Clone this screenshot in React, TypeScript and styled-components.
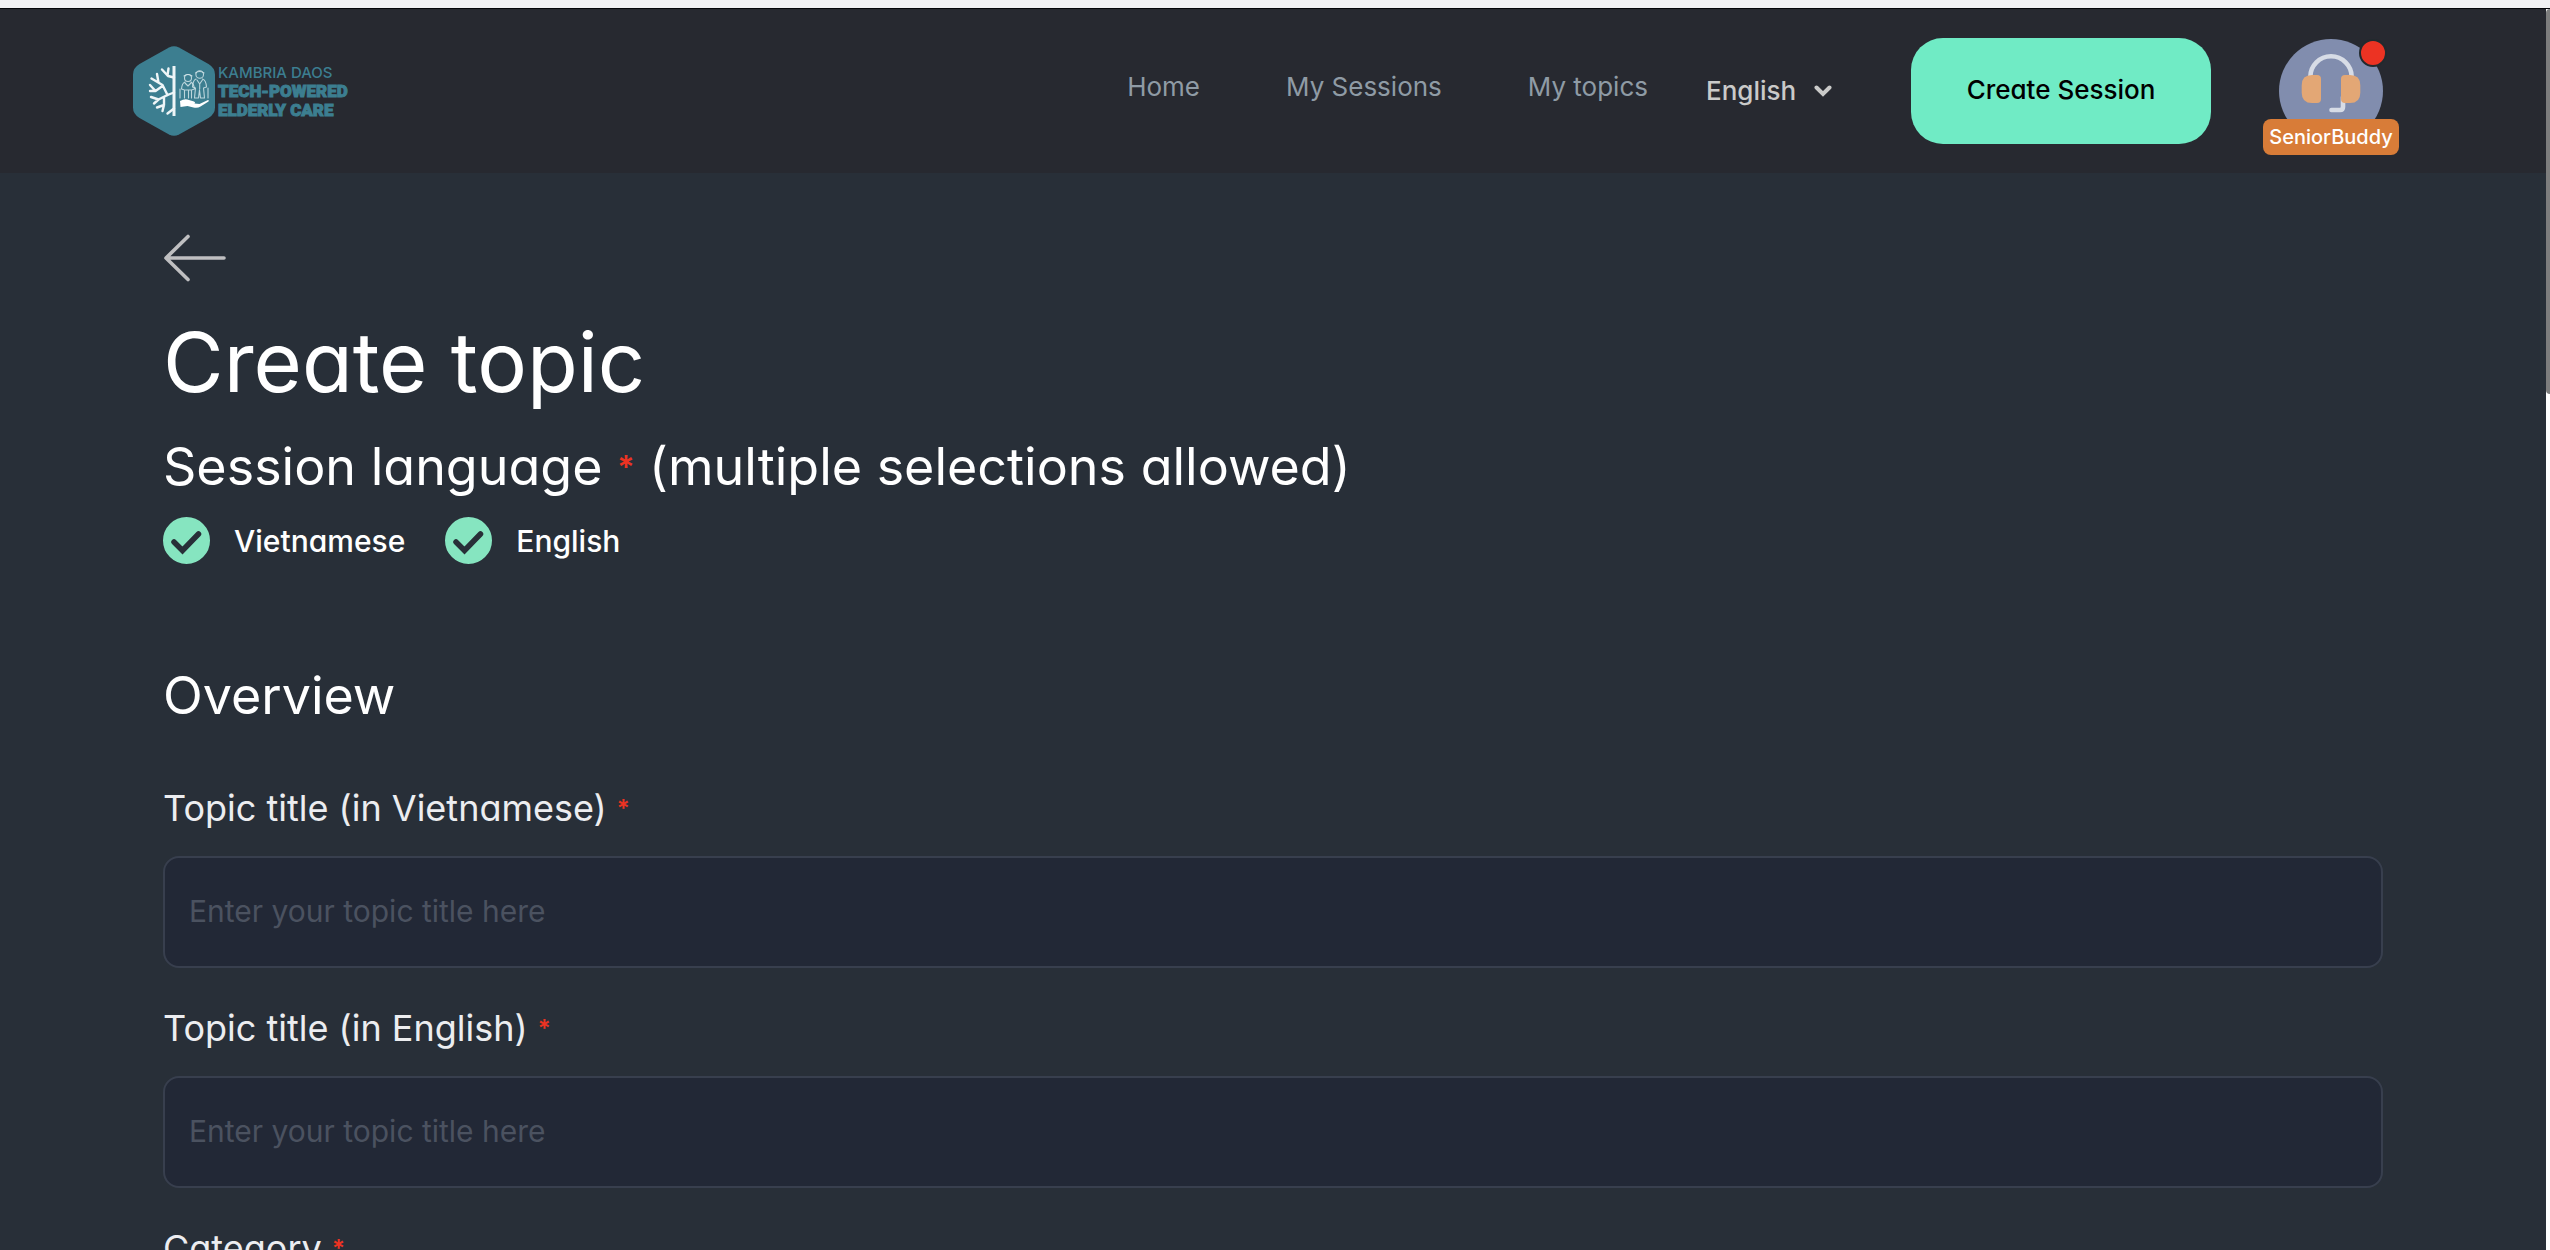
import React, { useId, useState } from "react";
import styled, { createGlobalStyle } from "styled-components";

const color = {
  page: "#282f38",
  header: "#272930",
  teal: "#3c7e90",
  mint: "#70ebc5",
  check: "#86e5c0",
  red: "#ec3323",
  orange: "#d87c38",
  field: "#222836",
  line: "#383f4e",
};

const GlobalStyle = createGlobalStyle`
  *, *::before, *::after { box-sizing: border-box; }
  body {
    margin: 0;
    background: ${color.page};
    color: #fff;
    font-family: Inter, "Liberation Sans", sans-serif;
    font-feature-settings: "cv11";
  }
  button, input, select { font: inherit; font-feature-settings: inherit; }
  h1, h2 { margin: 0; font-weight: 400; }
`;

const Shell = styled.div`
  display: flex;
  flex-direction: column;
  height: 100vh;
`;

const TopStrip = styled.div`
  flex: none;
  height: 9px;
  background: #f1f1f3;
  border-bottom: 1px solid #05060a;
`;

const Body = styled.div`
  display: flex;
  flex: 1;
  min-height: 0;
`;

const Scroller = styled.div`
  flex: 1;
  min-width: 0;
  overflow-y: auto;
  scrollbar-width: none;
`;

const Rail = styled.div`
  flex: none;
  width: 4px;
  background: #fff;
`;

const Thumb = styled.div`
  height: 31%;
  border-radius: 4px 0 0 4px;
  background: #7d7d7d;
`;

const Header = styled.header`
  display: flex;
  align-items: center;
  height: 164px;
  padding: 0 147px 0 133px;
  background: ${color.header};
`;

const LogoLink = styled.a`
  display: flex;
  align-items: center;
  gap: 3px;
  margin-right: auto;
  color: ${color.teal};
  text-decoration: none;
`;

const LogoText = styled.span`
  display: flex;
  flex-direction: column;
  padding-top: 2px;
`;

const LogoName = styled.span`
  font-size: 15px;
  font-weight: 500;
  line-height: 18px;
`;

const LogoTagline = styled.span`
  font-family: Roboto, sans-serif;
  font-size: 17px;
  font-weight: 900;
  line-height: 19px;
  -webkit-text-stroke: 1px ${color.teal};
`;

const Nav = styled.nav`
  display: flex;
  gap: 86px;
  margin-right: 58px;
  padding-bottom: 8px;
`;

const NavLink = styled.a`
  color: #8f9ba5;
  font-size: 26px;
  line-height: 32px;
  text-decoration: none;
`;

const LanguagePicker = styled.div`
  display: grid;
  align-items: center;
  width: 126px;
  margin-right: 79px;
  color: #cacac9;

  > * { grid-area: 1 / 1; }
  > svg { justify-self: end; pointer-events: none; }
`;

const LanguageSelect = styled.select`
  width: 100%;
  padding: 0;
  border: 0;
  appearance: none;
  background: transparent;
  color: inherit;
  font-size: 26px;
  font-weight: 500;
  line-height: 32px;
`;

const CreateButton = styled.button`
  width: 300px;
  height: 106px;
  margin-right: 52px;
  padding: 0 0 2px;
  border: 0;
  border-radius: 32px;
  background: ${color.mint};
  color: #000;
  font-size: 26px;
  font-weight: 500;
  line-height: 32px;
`;

const Profile = styled.button`
  position: relative;
  display: flex;
  justify-content: center;
  width: 136px;
  padding: 0;
  border: 0;
  background: none;

  > svg { display: block; overflow: visible; }
`;

const RoleBadge = styled.span`
  position: absolute;
  right: 0;
  bottom: -12px;
  left: 0;
  border-radius: 8px;
  background: ${color.orange};
  color: #fff;
  font-size: 20px;
  font-weight: 500;
  line-height: 36px;
  text-align: center;
`;

const Main = styled.main`
  padding: 61px 163px;
`;

const BackButton = styled.button`
  display: block;
  margin-bottom: 30px;
  padding: 0;
  border: 0;
  background: none;

  > svg { display: block; }
`;

const Title = styled.h1`
  margin-bottom: 22px;
  font-size: 83px;
  line-height: 101px;
`;

const SectionTitle = styled.h2`
  font-size: 52px;
  line-height: 64px;
`;

const Star = styled.span<{ $large?: boolean }>`
  color: ${color.red};
  font-size: ${(p) => (p.$large ? 32 : 24)}px;
  font-weight: 600;
  line-height: 1;
  vertical-align: ${(p) => (p.$large ? 6 : 4)}px;
`;

const Choices = styled.div`
  display: flex;
  gap: 40px;
  margin: 18px 0 100px;
`;

const Choice = styled.label`
  display: flex;
  align-items: center;
  gap: 24px;
  font-size: 30px;
  font-weight: 500;
  line-height: 36px;
`;

const Tick = styled.span`
  display: grid;
  width: 47px;
  height: 47px;

  > * { grid-area: 1 / 1; }
  > svg { pointer-events: none; }
  > input:not(:checked) + svg { visibility: hidden; }
`;

const TickInput = styled.input`
  width: 100%;
  height: 100%;
  margin: 0;
  border: 2px solid ${color.check};
  border-radius: 50%;
  appearance: none;

  &:checked { background: ${color.check}; }
`;

const Fields = styled.div`
  display: flex;
  flex-direction: column;
  gap: 36px;
  margin-top: 56px;
`;

const Field = styled.div`
  display: flex;
  flex-direction: column;
  gap: 24px;
`;

const FieldLabel = styled.label`
  color: #ecedf0;
  font-size: 36px;
  line-height: 48px;
`;

const TextBox = styled.input`
  width: 100%;
  height: 112px;
  padding: 0 24px 2px;
  border: 2px solid ${color.line};
  border-radius: 16px;
  background: ${color.field};
  color: #ecedf0;
  font-size: 30px;

  &::placeholder { color: #4b5260; opacity: 1; }
`;

function HexLogo() {
  return (
    <svg width="82" height="90" viewBox="0 0 82 90" fill="none" strokeLinecap="round" strokeLinejoin="round" aria-hidden="true">
      <path
        fill={color.teal}
        d="M36 1.5Q41-1.2 46 1.5L75.5 18Q82 22 82 28.500V61.500Q82 68 75.500 72L46 88.500Q41 91.200 36 88.500L6.500 72Q0 68 0 61.500V28.500Q0 22 6.500 18Z"
      />
      <g stroke="#eef5f7" strokeWidth="2.400">
        <path strokeWidth="3" strokeLinecap="butt" d="M41 20v50" />
        <path d="M41 31.500l-6-1.500-6-6.500M34.500 29.500l1-7" />
        <path d="M41 46.500l-6.500 2.500-5-10-11-6.500M25.500 36.500L24 28M29.500 40l-7 5-5.500-6M22.500 45h-5.500" />
        <path d="M34.500 49l-9 4.500-7.500-2.500M25.500 53.500l-4.500 4M31 51v8l-1.500 6M31 59l-7 2.500M41 62.500l-6.500 5" />
      </g>
      <g stroke="#d3e5ea" strokeOpacity="0.85" strokeWidth="1.100">
        <circle cx="55" cy="32" r="3.500" />
        <path d="M51 30q4-3 8 0" />
        <path d="M52 36q-3 1-3.500 7l3 1v8M58 36q3 2 3.500 7l-3 1v8M52 37l3 3 3-3M52.500 44h6M55.500 44v8M47 43v9" />
        <circle cx="66.700" cy="28.500" r="3.800" />
        <path d="M62.500 27q4-3 8.500 0" />
        <path d="M63 33q-3 1-3.500 8l3 1-1 10h4l1-8 1 8h4l-1-10 3-1q-.5-7-4-8M64 34l2.700 4 2.700-4M66.700 38v5M75 42v10" />
      </g>
      <path fill="#fff" d="M47 55q5-3 9-1l5 1.500q2 1 .5 2l5 .5 8.500-4q1.500 0 .5 1.500l-8 5q-3 2-7 1l-6-1.500-7 1z" />
    </svg>
  );
}

function Headset() {
  return (
    <svg width="104" height="104" viewBox="0 0 104 104" fill="none" aria-hidden="true">
      <circle cx="52" cy="52" r="52" fill="#818dae" />
      <g stroke="#d7dce6" strokeWidth="4.600" strokeLinecap="round">
        <path d="M31.300 38A20.700 20.700 0 0 1 72.700 38" />
        <path d="M64 58v10q0 3-3 3h-8.500" />
      </g>
      <g fill="#e3a775">
        <path d="M33 36h5q4 0 4 4v20q0 4-4 4h-5q-10.300 0-10.300-10.300v-7.400Q22.700 36 33 36z" />
        <path d="M71 36h-5q-4 0-4 4v20q0 4 4 4h5q10.300 0 10.300-10.300v-7.400Q81.300 36 71 36z" />
      </g>
      <circle cx="94" cy="14" r="13" fill={color.red} stroke="#222a2e" strokeWidth="2" />
    </svg>
  );
}

function LanguageChoice({ name }: { name: string }) {
  const [checked, setChecked] = useState(true);
  return (
    <Choice>
      <Tick>
        <TickInput type="checkbox" checked={checked} onChange={(e) => setChecked(e.target.checked)} />
        <svg width="47" height="47" viewBox="0 0 47 47" fill="none" aria-hidden="true">
          <path d="M11 25l8.500 8.500L35.500 17" stroke={color.page} strokeWidth="5.500" strokeLinecap="round" strokeLinejoin="miter" />
        </svg>
      </Tick>
      {name}
    </Choice>
  );
}

function FormField({ label, placeholder, select }: { label: string; placeholder?: string; select?: boolean }) {
  const id = useId();
  return (
    <Field>
      <FieldLabel htmlFor={id}>
        {label} <Star>*</Star>
      </FieldLabel>
      {select ? <TextBox as="select" id={id} /> : <TextBox id={id} type="text" placeholder={placeholder} />}
    </Field>
  );
}

export default function App() {
  return (
    <Shell>
      <GlobalStyle />
      <TopStrip />
      <Body>
        <Scroller>
          <Header>
            <LogoLink href="#">
              <HexLogo />
              <LogoText>
                <LogoName>KAMBRIA DAOS</LogoName>
                <LogoTagline>TECH-POWERED</LogoTagline>
                <LogoTagline>ELDERLY CARE</LogoTagline>
              </LogoText>
            </LogoLink>
            <Nav>
              <NavLink href="#">Home</NavLink>
              <NavLink href="#">My Sessions</NavLink>
              <NavLink href="#">My topics</NavLink>
            </Nav>
            <LanguagePicker>
              <LanguageSelect aria-label="Language" defaultValue="English">
                <option>English</option>
                <option>Vietnamese</option>
              </LanguageSelect>
              <svg width="18" height="12" viewBox="0 0 18 12" fill="none" aria-hidden="true">
                <path d="M2.500 2.500L9 9l6.500-6.500" stroke="currentColor" strokeWidth="4" strokeLinecap="round" />
              </svg>
            </LanguagePicker>
            <CreateButton type="button">Create Session</CreateButton>
            <Profile type="button">
              <Headset />
              <RoleBadge>SeniorBuddy</RoleBadge>
            </Profile>
          </Header>
          <Main>
            <BackButton type="button" aria-label="Back">
              <svg width="64" height="48" viewBox="0 0 64 48" fill="none" aria-hidden="true">
                <path d="M61 24H4M25 2.500L3 24l22 21.500" stroke="#bfbfc1" strokeWidth="3.600" strokeLinecap="round" strokeLinejoin="round" />
              </svg>
            </BackButton>
            <Title>Create topic</Title>
            <SectionTitle>
              Session language <Star $large>*</Star> (multiple selections allowed)
            </SectionTitle>
            <Choices>
              <LanguageChoice name="Vietnamese" />
              <LanguageChoice name="English" />
            </Choices>
            <SectionTitle>Overview</SectionTitle>
            <Fields>
              <FormField label="Topic title (in Vietnamese)" placeholder="Enter your topic title here" />
              <FormField label="Topic title (in English)" placeholder="Enter your topic title here" />
              <FormField label="Category" select />
            </Fields>
          </Main>
        </Scroller>
        <Rail aria-hidden="true">
          <Thumb />
        </Rail>
      </Body>
    </Shell>
  );
}
